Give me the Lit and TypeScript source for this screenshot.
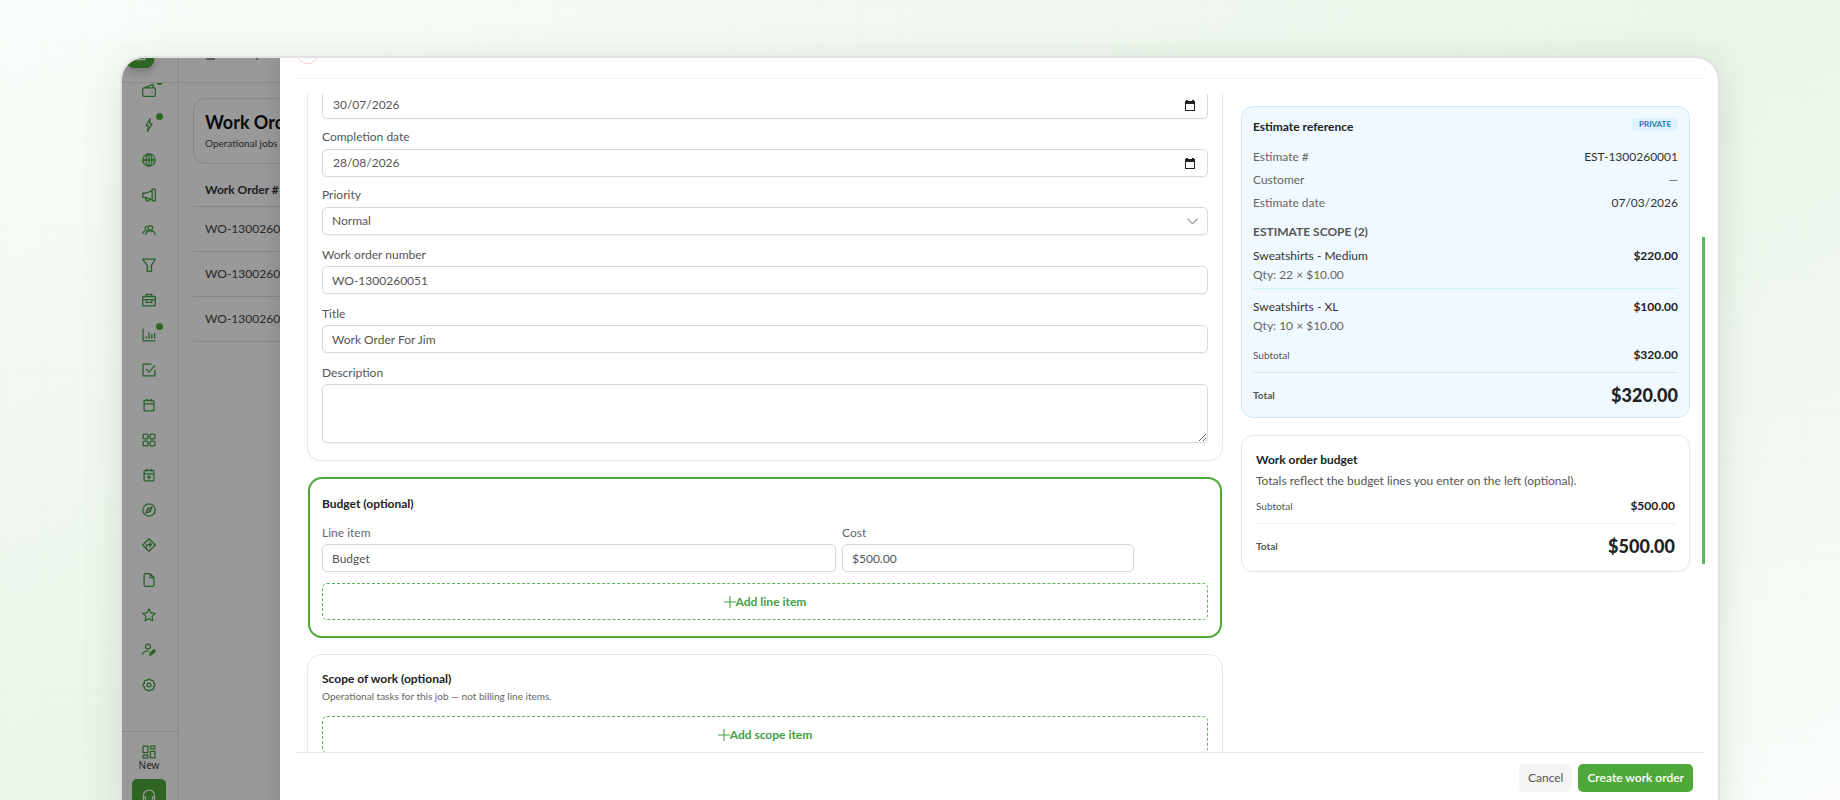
import {css, html, LitElement, svg} from 'lit';
import type {TemplateResult} from 'lit';
import {customElement, property} from 'lit/decorators.js';

const icons: Record<string, TemplateResult> = {
  wallet: svg`<path d="M2.5 7h15A1.5 1.5 0 0 1 19 8.5v9a1.5 1.5 0 0 1-1.5 1.5h-15A1.5 1.5 0 0 1 1 17.5v-9L2.5 7 16 2v5M14.5 12v2"/>`,
  bolt: svg`<path d="M11.5 1 5.5 11H9l-1 8 6.5-10.500H11z"/>`,
  globe: svg`<circle cx="10" cy="10" r="8.8"/><ellipse cx="10" cy="10" rx="4.2" ry="8.8"/><path d="M1.2 10h17.6M10 1.2v17.6"/>`,
  megaphone: svg`<path d="M1 7.5v6h3.5L14.5 17V4L4.5 7.5zM14.5 4V1.5H19v17h-4.5V17M5.5 14v2.5a2.4 2.4 0 0 0 4.8 0"/>`,
  users: svg`<circle cx="12" cy="7" r="3.2"/><path d="M5 17c1-7.5 13-7.5 14 0M8.500 5.500a2.600 2.600 0 1 0-.5 4.500M.8 15.500c.3-2.500 1.700-4 4.200-4.300"/>`,
  funnel: svg`<path d="M1 1.5h18l-5.5 9V19h-6v-8.5z"/>`,
  briefcase: svg`<rect x="1" y="5" width="18" height="13.5" rx="1"/><path d="M6 5V2h8v3M1 9.5h18M6 9.5v4h8v-4"/>`,
  chart: svg`<path d="M1.5 1v17.5H19M6 15.5v-4M10 15.5V6M14 15.5V9M18 15.5V7"/>`,
  check: svg`<path d="M18.5 9.5v9h-17v-17h12M6 8.500l4 4.500 8.500-9.500"/>`,
  calendar: svg`<rect x="3" y="3.5" width="14" height="15" rx="1.5"/><path d="M3 8.5h14M7 1v4.5M13 1v4.5"/>`,
  grid: svg`<rect x="1.5" y="1.5" width="7" height="7" rx="1.5"/><rect x="11.5" y="1.5" width="7" height="7" rx="1.5"/><rect x="1.5" y="11.5" width="7" height="7" rx="1.5"/><rect x="11.5" y="11.5" width="7" height="7" rx="1.5"/>`,
  calendarPlus: svg`<rect x="3" y="3.5" width="14" height="15" rx="1.5"/><path d="M3 8.5h14M7 1v4.5M13 1v4.5M10 10.5V16M7.2 13.2h5.6"/>`,
  compass: svg`<circle cx="10" cy="10" r="8.8"/><path d="M14.2 5.8 12 12l-6.2 2.2L8 8zM12 12 8 8"/>`,
  direction: svg`<path d="M10 1 19 10l-9 9-9-9zM6.5 13.5v-4H13M10.500 6.500l3 3-3 3"/>`,
  file: svg`<path d="M4.5 1h7L17 6.5v11a1.5 1.5 0 0 1-1.5 1.5h-11A1.5 1.5 0 0 1 3 17.5v-15A1.5 1.5 0 0 1 4.5 1zM11.5 1v5.5H17"/>`,
  star: svg`<path d="m10 1.2 2.7 5.7 6.2.8-4.5 4.3 1.1 6.2-5.5-3-5.5 3L5.6 12 1.1 7.7l6.2-.8z"/>`,
  userEdit: svg`<circle cx="8.5" cy="5" r="3.5"/><path d="M.8 16.5c.8-4.5 4.7-5.5 8.7-4.7M11 17.5l.4-2.8 5.6-5.2 2 2-5.4 5.4zM12.500 15.500l5-4.500"/>`,
  gear: svg`<path d="M16.5 7.3a2.8 2.8 0 0 1 0 5.4 2.8 2.8 0 0 1-3.8 3.8 2.8 2.8 0 0 1-5.4 0 2.8 2.8 0 0 1-3.8-3.8 2.8 2.8 0 0 1 0-5.4 2.8 2.8 0 0 1 3.8-3.8 2.8 2.8 0 0 1 5.4 0 2.8 2.8 0 0 1 3.8 3.8z"/><circle cx="10" cy="10" r="2.7"/>`,
  widgets: svg`<rect x="1.5" y="1.5" width="7" height="9.5"/><rect x="12" y="1.5" width="6.5" height="4"/><rect x="1.5" y="14.5" width="7" height="4"/><rect x="12" y="9" width="6.5" height="9.5"/>`,
  headset: svg`<path d="M2 16V9.5a8 8 0 0 1 16 0V16M2 11.5h3V17H2zM15 11.5h3V17h-3z"/>`,
  peak: svg`<path d="M3 18 10 3l7 15z"/>`,
  plus: svg`<path d="M10 0v20M0 10h20"/>`,
  chevron: svg`<path d="m1 5 9 9 9-9"/>`,
};

const navItems = [
  {name: 'Wallet', icon: 'wallet', dot: true},
  {name: 'Automations', icon: 'bolt', dot: true},
  {name: 'Website', icon: 'globe'},
  {name: 'Marketing', icon: 'megaphone'},
  {name: 'Contacts', icon: 'users'},
  {name: 'Pipeline', icon: 'funnel'},
  {name: 'Jobs', icon: 'briefcase'},
  {name: 'Reports', icon: 'chart', dot: true},
  {name: 'Tasks', icon: 'check'},
  {name: 'Calendar', icon: 'calendar'},
  {name: 'Apps', icon: 'grid'},
  {name: 'Booking', icon: 'calendarPlus'},
  {name: 'Explore', icon: 'compass'},
  {name: 'Routes', icon: 'direction'},
  {name: 'Documents', icon: 'file'},
  {name: 'Reviews', icon: 'star'},
  {name: 'Team', icon: 'userEdit'},
  {name: 'Settings', icon: 'gear'},
];

@customElement('line-icon')
export class LineIcon extends LitElement {
  @property() name = 'grid';

  static override styles = css`
      :host {
          display: inline-flex;
          width: 14px;
          height: 14px;
      }

      svg {
          width: 100%;
          height: 100%;
          fill: none;
          stroke: currentColor;
          stroke-width: var(--icon-stroke, 1.8);
          stroke-linejoin: round;
      }
  `;

  override render() {
    return html`<svg viewBox="0 0 20 20" aria-hidden="true">${icons[this.name]}</svg>`;
  }
}

@customElement('side-bar')
export class SideBar extends LitElement {
  static override styles = css`
      :host {
          display: flex;
          flex-direction: column;
          flex: none;
          width: 57px;
          box-sizing: border-box;
          border-right: 2px solid #f0f0f0;
          color: #43a047;
      }

      .brand {
          display: flex;
          align-items: flex-end;
          height: 25px;
          padding: 0 0 14px 4px;
          box-sizing: border-box;
          border-bottom: 1px solid #e4e4e4;
      }

      .logo {
          display: flex;
          align-items: center;
          justify-content: center;
          flex: none;
          width: 28px;
          height: 28px;
          border-radius: 8px;
          background: #4ea93a;
          box-shadow: 0 3px 8px rgba(0, 0, 0, 0.25);
          color: #fff;
      }

      nav {
          flex: 1;
          min-height: 0;
          padding-right: 1px;
          overflow: hidden;
      }

      ul {
          list-style: none;
          margin: -11px 0 0;
          padding: 0;
      }

      a {
          display: flex;
          align-items: center;
          justify-content: center;
          position: relative;
          height: 35px;
          color: inherit;
      }

      .dot {
          position: absolute;
          top: 6px;
          left: 34px;
          width: 7px;
          height: 7px;
          border-radius: 50%;
          background: #4ea93a;
      }

      .bottom {
          display: flex;
          flex-direction: column;
          align-items: center;
          padding: 13px 1px 3px 0;
          border-top: 1px solid #e4e4e4;
      }

      .new {
          display: flex;
          flex-direction: column;
          align-items: center;
          border: 0;
          padding: 0;
          margin-bottom: 7px;
          background: none;
          color: #43a047;
          font: 10px/13px "Noto Sans", sans-serif;
      }

      .new span {
          color: #444;
      }

      .support {
          display: flex;
          align-items: center;
          justify-content: center;
          width: 34px;
          height: 34px;
          border: 0;
          border-radius: 5px;
          background: #4ea93a;
          color: #fff;
      }
  `;

  override render() {
    return html`
      <div class="brand"><div class="logo"><line-icon name="peak"></line-icon></div></div>
      <nav aria-label="Main">
        <ul>
          ${navItems.map(item => html`
            <li>
              <a href="#" aria-label=${item.name}>
                <line-icon name=${item.icon}></line-icon>
                ${item.dot ? html`<i class="dot"></i>` : null}
              </a>
            </li>
          `)}
        </ul>
      </nav>
      <div class="bottom">
        <button class="new"><line-icon name="widgets"></line-icon><span>New</span></button>
        <button class="support" aria-label="Support"><line-icon name="headset"></line-icon></button>
      </div>
    `;
  }
}

@customElement('orders-page')
export class OrdersPage extends LitElement {
  static override styles = css`
      :host {
          display: block;
          flex: none;
          width: 101px;
          overflow: hidden;
          color: #444;
          font-size: 12px;
          line-height: 16px;
          white-space: nowrap;
      }

      .topbar {
          display: flex;
          align-items: flex-end;
          gap: 41px;
          height: 25px;
          padding: 0 27px 22px;
          box-sizing: border-box;
          border-bottom: 1px solid #e4e4e4;
      }

      .topbar i {
          width: 9px;
          flex: none;
          border-bottom: 2px solid #999;
      }

      .topbar i + i {
          width: 2px;
      }

      .content {
          min-width: 480px;
          padding: 15px 16px 0 14px;
      }

      .intro {
          padding: 12px 11px;
          height: 66px;
          box-sizing: border-box;
          border: 1px solid #e2e2e2;
          border-radius: 12px;
      }

      h1 {
          margin: 0 0 2px;
          color: #111;
          font-size: 18px;
          line-height: 23px;
      }

      p {
          margin: 0;
          font-size: 10px;
          line-height: 14px;
      }

      table {
          width: 100%;
          margin-top: 11px;
          border-collapse: collapse;
          text-align: left;
      }

      th {
          height: 31px;
          color: #333;
      }

      td {
          height: 45px;
      }

      th, td {
          padding: 0 12px;
          box-sizing: border-box;
          border-bottom: 1px solid #e0e0e0;
      }
  `;

  override render() {
    return html`
      <div class="topbar"><i></i><i></i></div>
      <div class="content">
        <div class="intro">
          <h1>Work Orders</h1>
          <p>Operational jobs</p>
        </div>
        <table>
          <thead><tr><th>Work Order #</th></tr></thead>
          <tbody>
            ${['WO-1300260050', 'WO-1300260049', 'WO-1300260048'].map(id => html`<tr><td>${id}</td></tr>`)}
          </tbody>
        </table>
      </div>
    `;
  }
}

@customElement('work-order-drawer')
export class WorkOrderDrawer extends LitElement {
  static override styles = css`
      :host {
          display: flex;
          flex-direction: column;
          flex: 1;
          position: relative;
          min-width: 0;
          box-sizing: border-box;
          padding: 0 13px 0 16px;
          background: #fff;
          box-shadow: -4px 0 16px rgba(0, 0, 0, 0.1);
          color: #555;
          font-size: 12px;
          line-height: 16px;
      }

      * {
          box-sizing: border-box;
      }

      header {
          display: flex;
          align-items: flex-end;
          flex: none;
          height: 21px;
          padding-bottom: 14px;
          border-bottom: 1px solid #f1f1f1;
      }

      .close {
          flex: none;
          width: 23px;
          height: 23px;
          border: 1px solid #ffc9c9;
          border-radius: 50%;
          background: #fff;
      }

      .body {
          display: flex;
          align-items: flex-start;
          flex: 1;
          min-height: 0;
          gap: 18px;
          margin-top: 15px;
          padding-left: 11px;
          overflow: hidden;
      }

      /* the form is scrolled a little past its first field */
      .form {
          display: flex;
          flex-direction: column;
          flex: 1;
          gap: 16px;
          margin-top: -18px;
      }

      .card {
          padding: 16px 14px 17px;
          border: 1px solid #e8e8e8;
          border-radius: 14px;
          background: #fff;
          box-shadow: 0 1px 2px rgba(0, 0, 0, 0.04);
      }

      .details {
          display: flex;
          flex-direction: column;
          gap: 10px;
          padding-top: 14px;
      }

      .highlight {
          margin: 0 1px;
          padding: 17px 12px 16px;
          border: 2px solid #4ea93a;
      }

      .field {
          display: flex;
          flex-direction: column;
          gap: 4px;
      }

      .field.compact {
          gap: 3px;
      }

      .details .compact {
          padding-top: 2px;
      }

      .control {
          display: flex;
          align-items: center;
          width: 100%;
          height: 28px;
          padding: 0 9px;
          border: 1px solid #d9d9d9;
          border-radius: 5px;
          background: #fff;
          box-shadow: 0 1px 2px rgba(0, 0, 0, 0.04);
          color: #555;
          font: inherit;
      }

      input:focus, select:focus, textarea:focus {
          outline: none;
      }

      .date input {
          flex: 1;
          min-width: 0;
          padding: 0 1px;
          border: 0;
          color: inherit;
          font: inherit;
      }

      .date button {
          display: flex;
          padding: 0 3px;
          border: 0;
          background: none;
      }

      .select select {
          flex: 1;
          padding: 0;
          border: 0;
          appearance: none;
          background: none;
          color: inherit;
          font: inherit;
      }

      .select line-icon {
          width: 11px;
          height: 11px;
          color: #999;
          --icon-stroke: 2;
      }

      textarea.control {
          display: block;
          height: 59px;
          padding: 5px 9px;
      }

      h2 {
          margin: 0;
          color: #222;
          font-size: 12px;
          line-height: 16px;
      }

      .line {
          display: grid;
          grid-template-columns: 514fr 292fr 68fr;
          gap: 6px;
          margin: 13px 0 11px;
          color: #666;
      }

      .add {
          display: flex;
          align-items: center;
          justify-content: center;
          width: 100%;
          height: 37px;
          border: 1px dashed #5cb555;
          border-radius: 5px;
          background: #fff;
          color: #43a047;
          font: bold 12px/16px Lato, sans-serif;
      }

      .add line-icon {
          width: 12px;
          height: 12px;
      }

      .hint {
          margin: 1px 0 12px;
          color: #666;
          font-size: 10px;
          line-height: 16px;
      }

      aside {
          display: flex;
          flex-direction: column;
          flex: none;
          width: 449px;
          gap: 17px;
          margin: 12px -6px 0 0;
      }

      .estimate {
          padding: 11px 11px 1px;
          border: 1px solid #c9e9fb;
          border-radius: 12px;
          background: #f0f9ff;
      }

      .row {
          display: flex;
          align-items: center;
          justify-content: space-between;
      }

      .row.top {
          align-items: flex-start;
          margin-bottom: 10px;
      }

      .top h2 {
          padding-top: 1px;
      }

      .badge {
          padding: 0 7px;
          border-radius: 3px;
          background: #e0f2fe;
          color: #1b7ab3;
          font-size: 8px;
          font-weight: bold;
          line-height: 13px;
      }

      dl, dd, h3, aside p {
          margin: 0;
      }

      dl .row {
          height: 23px;
          color: #666;
      }

      dd {
          color: #333;
      }

      dd.blank {
          color: #666;
      }

      h3 {
          margin: 10px 0 8px;
          font-size: 12px;
          line-height: 16px;
      }

      .item {
          color: #333;
      }

      .item + .item {
          margin-top: 5px;
          padding-top: 10px;
          border-top: 1px solid #cdeefb;
      }

      .item p {
          padding-top: 3px;
          color: #666;
      }

      strong {
          color: #222;
      }

      .subtotal {
          height: 35px;
          font-size: 10px;
          border-bottom: 1px solid #dde3e6;
      }

      .estimate .subtotal {
          margin-top: 4px;
      }

      .subtotal strong {
          font-size: 12px;
      }

      .total {
          height: 43px;
          font-size: 10px;
          font-weight: bold;
      }

      .total strong {
          font-size: 18px;
      }

      .budget {
          padding: 16px 14px 4px;
          border-radius: 12px;
      }

      .budget p {
          padding: 5px 0 0;
      }

      .budget .subtotal {
          border-color: #eee;
      }

      .thumb {
          flex: none;
          width: 3px;
          height: 327px;
          margin-top: 143px;
          background: #5cb860;
      }

      footer {
          display: flex;
          justify-content: flex-end;
          flex: none;
          gap: 6px;
          padding: 11px 12px 24px;
          border-top: 1px solid #e8e8e8;
      }

      footer button {
          height: 28px;
          padding: 0 9px;
          border: 0;
          border-radius: 5px;
          background: #f4f4f4;
          color: #555;
          font: 12px/16px Lato, sans-serif;
      }

      footer .primary {
          background: #4ea93a;
          color: #fff;
          font-weight: 600;
      }
  `;

  private dateControl(id: string, value: string, name: string) {
    return html`
      <div class="control date">
        <input id=${id} type="text" aria-label=${name} .value=${value}>
        <button aria-label="Pick a date">
          <svg width="10" height="11" viewBox="0 0 10 11" aria-hidden="true">
            <path d="M1 0h2v1h4V0h2v1h1v10H0V1h1zM1 4v6h8V4z" fill="#222" fill-rule="evenodd"/>
          </svg>
        </button>
      </div>
    `;
  }

  private textField(id: string, label: string, value: string) {
    return html`
      <div class="field compact">
        <label for=${id}>${label}</label>
        <input class="control" id=${id} type="text" .value=${value}>
      </div>
    `;
  }

  private scopeItem(name: string, qty: string, price: string) {
    return html`
      <div class="item">
        <div class="row"><span>${name}</span><strong>${price}</strong></div>
        <p>${qty}</p>
      </div>
    `;
  }

  private totals(amount: string) {
    return html`
      <div class="row subtotal"><span>Subtotal</span><strong>${amount}</strong></div>
      <div class="row total"><span>Total</span><strong>${amount}</strong></div>
    `;
  }

  override render() {
    return html`
      <header><button class="close" aria-label="Close"></button></header>
      <div class="body">
        <div class="form">
          <section class="card details">
            ${this.dateControl('start', '30/07/2026', 'Start date')}
            <div class="field">
              <label for="completion">Completion date</label>
              ${this.dateControl('completion', '28/08/2026', 'Completion date')}
            </div>
            <div class="field">
              <label for="priority">Priority</label>
              <div class="control select">
                <select id="priority"><option>Normal</option></select>
                <line-icon name="chevron"></line-icon>
              </div>
            </div>
            ${this.textField('number', 'Work order number', 'WO-1300260051')}
            ${this.textField('title', 'Title', 'Work Order For Jim')}
            <div class="field compact">
              <label for="description">Description</label>
              <textarea class="control" id="description"></textarea>
            </div>
          </section>
          <section class="card highlight">
            <h2>Budget (optional)</h2>
            <div class="line">
              ${this.textField('item', 'Line item', 'Budget')}
              ${this.textField('cost', 'Cost', '$500.00')}
            </div>
            <button class="add"><line-icon name="plus"></line-icon>Add line item</button>
          </section>
          <section class="card">
            <h2>Scope of work (optional)</h2>
            <p class="hint">Operational tasks for this job — not billing line items.</p>
            <button class="add"><line-icon name="plus"></line-icon>Add scope item</button>
          </section>
        </div>
        <aside>
          <section class="estimate">
            <div class="row top"><h2>Estimate reference</h2><span class="badge">PRIVATE</span></div>
            <dl>
              <div class="row"><dt>Estimate #</dt><dd>EST-1300260001</dd></div>
              <div class="row"><dt>Customer</dt><dd class="blank">—</dd></div>
              <div class="row"><dt>Estimate date</dt><dd>07/03/2026</dd></div>
            </dl>
            <h3>ESTIMATE SCOPE (2)</h3>
            ${this.scopeItem('Sweatshirts - Medium', 'Qty: 22 × $10.00', '$220.00')}
            ${this.scopeItem('Sweatshirts - XL', 'Qty: 10 × $10.00', '$100.00')}
            ${this.totals('$320.00')}
          </section>
          <section class="card budget">
            <h2>Work order budget</h2>
            <p>Totals reflect the budget lines you enter on the left (optional).</p>
            ${this.totals('$500.00')}
          </section>
        </aside>
        <div class="thumb"></div>
      </div>
      <footer>
        <button>Cancel</button>
        <button class="primary">Create work order</button>
      </footer>
    `;
  }
}

@customElement('app-root')
export class AppRoot extends LitElement {
  static override styles = css`
      :host {
          display: flex;
          height: 100vh;
          padding: 56px 120px 0;
          box-sizing: border-box;
          overflow: hidden;
          font-family: Lato, sans-serif;
          background:
              repeating-linear-gradient(90deg, rgba(80, 150, 70, 0.02) 0 1px, transparent 1px 43px),
              repeating-linear-gradient(rgba(80, 150, 70, 0.02) 0 1px, transparent 1px 46px),
              linear-gradient(to bottom right, #fafdfa, #eaf5e8 50%, #fafdfa);
      }

      .frame {
          display: flex;
          flex: 1;
          position: relative;
          min-width: 0;
          margin-bottom: -16px;
          overflow: hidden;
          border: 2px solid #e2e3e2;
          border-bottom: 0;
          border-radius: 24px 24px 0 0;
          background: #fff;
          box-shadow: 0 8px 40px rgba(30, 50, 30, 0.12);
      }

      .shade {
          position: absolute;
          inset: 0;
          background: rgba(0, 0, 0, 0.4);
      }
  `;

  override render() {
    return html`
      <div class="frame">
        <side-bar></side-bar>
        <orders-page></orders-page>
        <div class="shade"></div>
        <work-order-drawer></work-order-drawer>
      </div>
    `;
  }
}

declare global {
  interface HTMLElementTagNameMap {
    'line-icon': LineIcon;
    'side-bar': SideBar;
    'orders-page': OrdersPage;
    'work-order-drawer': WorkOrderDrawer;
    'app-root': AppRoot;
  }
}
